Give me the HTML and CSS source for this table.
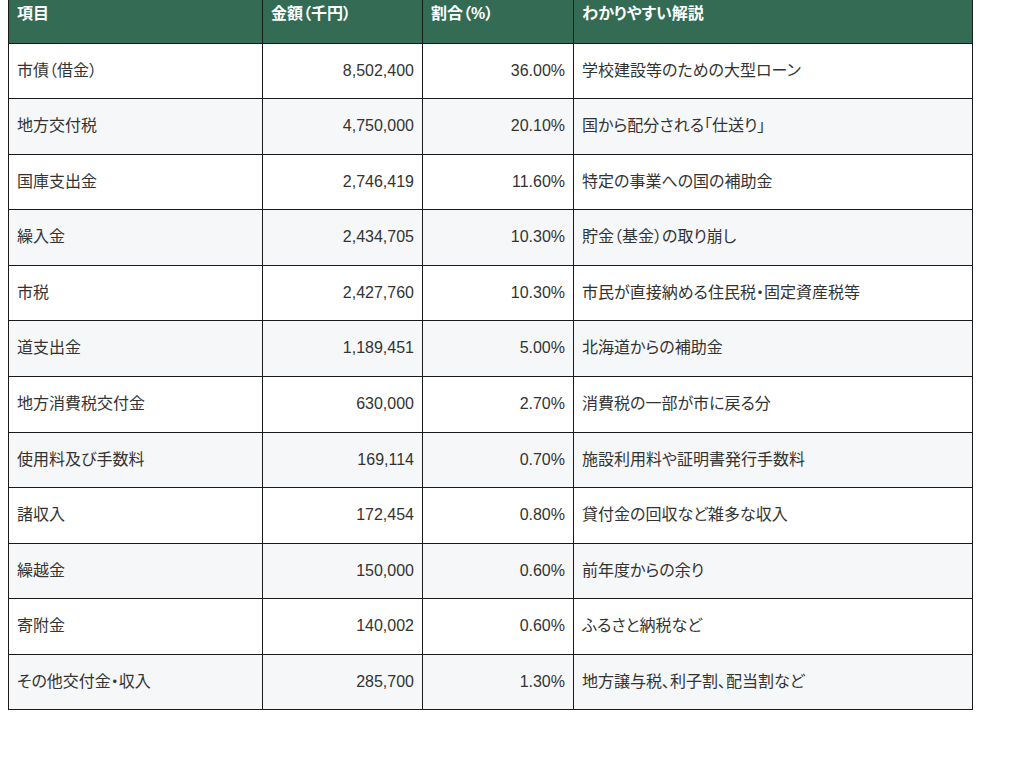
FILE: index.html
```html
<!DOCTYPE html>
<html lang="ja">
<head>
<meta charset="utf-8">
<title>歳入内訳</title>
<link rel="stylesheet" href="styles.css">
</head>
<body>
<table class="budget">
  <colgroup>
    <col class="c-item">
    <col class="c-amount">
    <col class="c-ratio">
    <col class="c-desc">
  </colgroup>
  <thead>
    <tr><th>項目</th><th>金額（千円）</th><th>割合（%）</th><th>わかりやすい解説</th></tr>
  </thead>
  <tbody>
    <tr><td>市債（借金）</td><td class="num">8,502,400</td><td class="num">36.00%</td><td>学校建設等のための大型ローン</td></tr>
    <tr><td>地方交付税</td><td class="num">4,750,000</td><td class="num">20.10%</td><td>国から配分される「仕送り」</td></tr>
    <tr><td>国庫支出金</td><td class="num">2,746,419</td><td class="num">11.60%</td><td>特定の事業への国の補助金</td></tr>
    <tr><td>繰入金</td><td class="num">2,434,705</td><td class="num">10.30%</td><td>貯金（基金）の取り崩し</td></tr>
    <tr><td>市税</td><td class="num">2,427,760</td><td class="num">10.30%</td><td>市民が直接納める住民税・固定資産税等</td></tr>
    <tr><td>道支出金</td><td class="num">1,189,451</td><td class="num">5.00%</td><td>北海道からの補助金</td></tr>
    <tr><td>地方消費税交付金</td><td class="num">630,000</td><td class="num">2.70%</td><td>消費税の一部が市に戻る分</td></tr>
    <tr><td>使用料及び手数料</td><td class="num">169,114</td><td class="num">0.70%</td><td>施設利用料や証明書発行手数料</td></tr>
    <tr><td>諸収入</td><td class="num">172,454</td><td class="num">0.80%</td><td>貸付金の回収など雑多な収入</td></tr>
    <tr><td>繰越金</td><td class="num">150,000</td><td class="num">0.60%</td><td>前年度からの余り</td></tr>
    <tr><td>寄附金</td><td class="num">140,002</td><td class="num">0.60%</td><td>ふるさと納税など</td></tr>
    <tr><td>その他交付金・収入</td><td class="num">285,700</td><td class="num">1.30%</td><td>地方譲与税、利子割、配当割など</td></tr>
  </tbody>
</table>
</body>
</html>
```

FILE: styles.css
```css
body {
  margin: 0 8px;
  background: #ffffff;
  font-family: "Liberation Sans", "Noto Sans CJK JP", sans-serif;
  font-size: 16px;
  color: #333333;
  font-feature-settings: "palt";
}
.budget {
  width: 964px;
  table-layout: fixed;
  border-collapse: collapse;
}
.c-item { width: 254px; }
.c-amount { width: 160px; }
.c-ratio { width: 151px; }
.c-desc { width: 399px; }
.budget th,
.budget td {
  border: 1px solid #1a1a1a;
  padding: 16px 8px;
  line-height: 22.56px;
  text-align: left;
  vertical-align: middle;
  white-space: nowrap;
}
.budget th {
  padding-top: 3px;
  padding-bottom: 17px;
  border-top: none;
  background: #336b54;
  color: #ffffff;
  font-weight: bold;
}
.budget tbody tr:nth-child(even) td {
  background: #f6f7f8;
}
.budget td.num {
  text-align: right;
}
```
